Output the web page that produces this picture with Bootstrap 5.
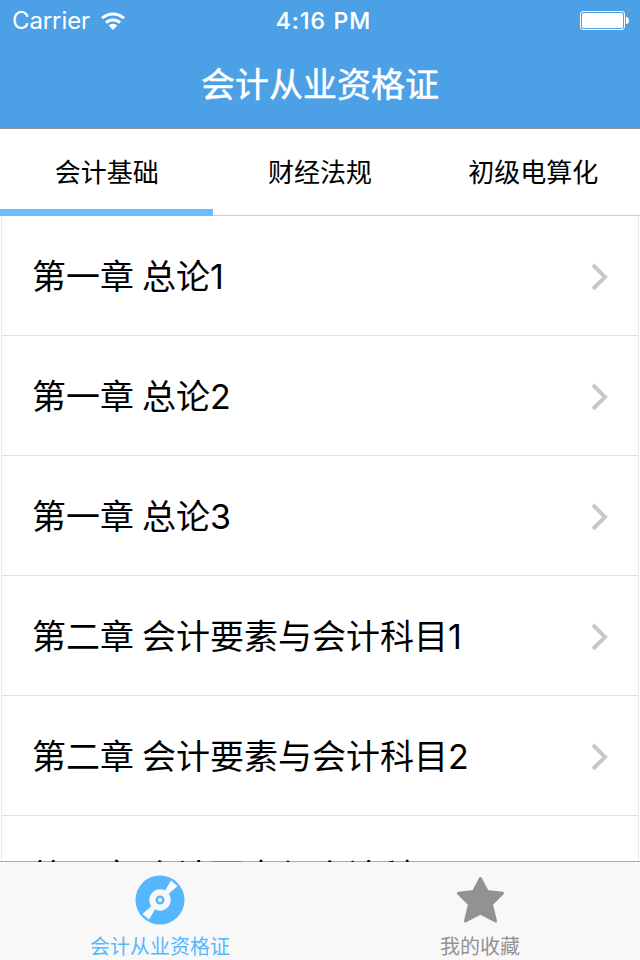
<!DOCTYPE html>
<html lang="zh-CN">
<head>
    <meta charset="UTF-8">
    <meta name="viewport" content="width=device-width, initial-scale=1">
    <title>会计从业资格证</title>
    <link href="https://cdn.jsdelivr.net/npm/bootstrap@5.3.0/dist/css/bootstrap.min.css" rel="stylesheet">
    <style>
        body { font-family: Inter, "Noto Sans CJK SC", sans-serif; color: #000; }
        svg { display: block; flex: none; }

        .top-bar { height: 129px; background: #4ca0e5; border-bottom: 1px solid #8f9295; }
        .status-bar { height: 42px; padding: 0 11px 0 12px; font-size: 24px; line-height: 42px; }
        .carrier { letter-spacing: -.1px; }
        .clock { padding-left: 6px; font-size: 23px; font-weight: 500; letter-spacing: 1.1px; -webkit-text-stroke: .2px #fff; }
        .page-title { height: 86px; font-size: 34px; line-height: 86px; -webkit-text-stroke: .5px #fff; }

        .subject-tabs { height: 87px; border-bottom: 1px solid #cfcfcf; }
        .subject-tabs .nav-link { height: 87px; padding: 0; font-size: 26px; line-height: 87px; color: #000; }
        .subject-tabs .nav-link.active { border-bottom: 7px solid #6ebcfd; }

        .chapters { min-height: 0; margin: 0 1px; border: solid #e9e9e9; border-width: 0 1px; }
        .chapters .list-group-item { height: 120px; padding: 2px 30px 0; font-size: 34px; line-height: 118px; color: #000; border-color: #e2e2e2; white-space: nowrap; word-spacing: -1.5px; }

        .tab-bar { height: 99px; margin-top: -1px; background: #f8f8f8; background-clip: padding-box; border-top: 1px solid rgba(0, 0, 0, .33); }
        .tab-bar .nav-link { padding: 13px 0 0; font-size: 20px; line-height: 24px; color: #929292; }
        .tab-bar .nav-link.active { color: #55b8ff; }
        .tab-bar svg { margin: 0 auto 10px; }
    </style>
</head>
<body>
<div class="d-flex flex-column vh-100 overflow-hidden">
    <header class="top-bar flex-shrink-0 text-white">
        <div class="status-bar row g-0 align-items-center">
            <div class="col d-flex align-items-center">
                <span class="carrier">Carrier</span>
                <svg class="ms-2" width="30" height="20" viewBox="0 0 30 20" fill="none" stroke="#fff" stroke-width="3">
                    <path d="M4 7.200a16.200 16.200 0 0 1 22 0M8 11.700a10.200 10.200 0 0 1 14 0"/>
                    <path d="M10.600 14.600a6.400 6.400 0 0 1 8.800 0L15 19z" fill="#fff" stroke="none"/>
                </svg>
            </div>
            <div class="col-auto clock">4:16 PM</div>
            <div class="col d-flex justify-content-end">
                <svg width="49" height="20" viewBox="0 0 49 20">
                    <rect x=".5" y=".5" width="44" height="18" rx="2.5" fill="none" stroke="#fff"/>
                    <rect x="2" y="2" width="41" height="15" rx="1.5" fill="#fff"/>
                    <path d="M46 6h1q2 1 2 3.5T47 13h-1z" fill="#fff"/>
                </svg>
            </div>
        </div>
        <h1 class="page-title text-center m-0 fw-normal">会计从业资格证</h1>
    </header>

    <nav class="subject-tabs nav row g-0 flex-shrink-0 text-center">
        <a class="nav-link col active" href="#">会计基础</a>
        <a class="nav-link col" href="#">财经法规</a>
        <a class="nav-link col" href="#">初级电算化</a>
    </nav>

    <main class="chapters list-group list-group-flush flex-fill overflow-hidden rounded-0" id="chapterList"></main>

    <footer class="tab-bar row g-0 flex-shrink-0 position-relative text-center">
        <a class="nav-link col active" href="#">
            <svg width="50" height="50" viewBox="0 0 50 50">
                <circle cx="25" cy="25" r="24.5" fill="#55b8ff"/>
                <path d="M36 5.500 42.500 11 32.500 20 30 15.500zM14 44.500 7.500 39 17.500 30 20 34.500z" fill="#f8f8f8"/>
                <circle cx="25" cy="25" r="10.700" fill="#f8f8f8"/>
                <circle cx="25" cy="25" r="3.300" fill="none" stroke="#55b8ff" stroke-width="2.500"/>
            </svg>
            会计从业资格证
        </a>
        <a class="nav-link col" href="#">
            <svg width="50" height="50" viewBox="0 0 50 50" fill="#929292" stroke="#929292" stroke-width="3" stroke-linejoin="round">
                <path d="M25.400 3.500 32.200 16.400 47.500 18.300 36.500 29.300 40.500 46 25.400 38.200 10.500 46 14.400 29.300 3.300 18.300 18.600 16.400z"/>
            </svg>
            我的收藏
        </a>
    </footer>
</div>

<script src="https://cdn.jsdelivr.net/npm/bootstrap@5.3.0/dist/js/bootstrap.bundle.min.js"></script>
<script>
    const chapters = [
        "第一章 总论1",
        "第一章 总论2",
        "第一章 总论3",
        "第二章 会计要素与会计科目1",
        "第二章 会计要素与会计科目2",
        "第二章 会计要素与会计科目3"
    ];

    document.getElementById("chapterList").innerHTML = chapters.map(name => `
        <a class="list-group-item flex-shrink-0 d-flex justify-content-between align-items-center" href="#">
            <span>${name}</span>
            <svg width="17" height="28" viewBox="0 0 17 28" fill="none" stroke="#c7c7cc" stroke-width="4">
                <path d="M2 2 14 14 2 26"/>
            </svg>
        </a>`).join("");
</script>
</body>
</html>
